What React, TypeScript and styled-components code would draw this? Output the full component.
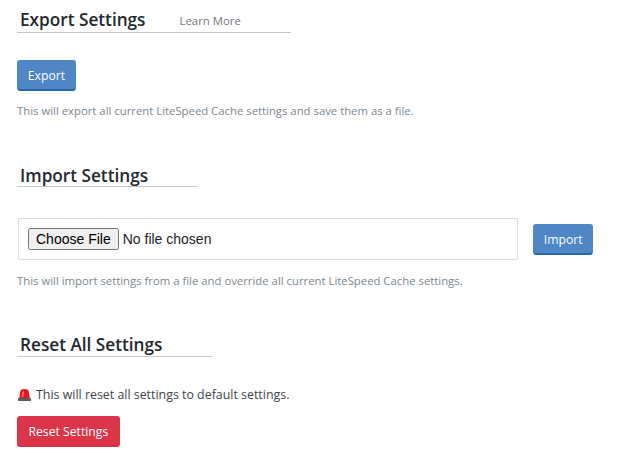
import React from "react";
import styled, { createGlobalStyle } from "styled-components";

const GlobalStyle = createGlobalStyle`
    html, body {
        margin: 0;
        background: #fff;
    }
    body {
        font-family: "Open Sans", "Noto Sans", sans-serif;
        color: #23282d;
    }
`;

const Page = styled.div`
    width: 624px;
    height: 453px;
    box-sizing: border-box;
    overflow: hidden;
    padding: 8px 0 0 17px;
`;

const Section = styled.section<{ $gap?: number }>`
    margin-bottom: ${(p) => p.$gap ?? 0}px;
`;

const Heading = styled.h3<{ $width: number; $after: number; $drop?: number }>`
    display: flex;
    align-items: baseline;
    box-sizing: border-box;
    width: ${(p) => p.$width}px;
    height: 25px;
    margin: 0 0 ${(p) => p.$after}px;
    padding: ${(p) => p.$drop ?? 0}px 0 0 3px;
    border-bottom: 1px solid #c8c8c8;
    font-size: 17.2px;
    line-height: 23px;
    font-weight: 600;
    color: #23282d;
`;

const LearnMore = styled.a`
    align-self: flex-start;
    margin-left: 34px;
    font-size: 11.4px;
    line-height: 26px;
    font-weight: 400;
    color: #72777c;
    text-decoration: none;
`;

const Button = styled.button<{ $danger?: boolean }>`
    display: block;
    box-sizing: border-box;
    height: 31px;
    padding: 1px ${(p) => (p.$danger ? 10.5 : 9.8)}px 0;
    border: 1px solid ${(p) => (p.$danger ? "#dc3549" : "#4d88c6")};
    border-bottom: 2px solid ${(p) => (p.$danger ? "#d5304a" : "#2a66ab")};
    border-radius: 3px;
    background: ${(p) => (p.$danger ? "#dc3549" : "#4e86c6")};
    color: #fff;
    font-family: inherit;
    font-size: 12.2px;
    line-height: 28px;
`;

const Note = styled.p`
    margin: 12px 0 0;
    font-size: 11.33px;
    line-height: 16px;
    color: #7d878f;
`;

const ImportRow = styled.div`
    display: flex;
    align-items: center;
    gap: 15px;
    padding-bottom: 1px;
`;

const FileBox = styled.div`
    box-sizing: border-box;
    display: flex;
    align-items: center;
    width: 500px;
    height: 42px;
    margin-left: 1px;
    padding-left: 9px;
    border: 1px solid #ddd;
    box-shadow: inset 0 0 1px rgba(0, 0, 0, 0.12);
`;

const FileInput = styled.input`
    font-family: "Liberation Sans", Arial, sans-serif;
    font-size: 14px;
    color: #222;
`;

const Warning = styled.p`
    display: flex;
    align-items: center;
    gap: 4px;
    margin: 0 0 12px;
    font-size: 12.4px;
    line-height: 18px;
    color: #3c434a;
`;

const Alarm: React.FC = () => (
    <svg width="15" height="14" viewBox="0 0 15 14">
        <path d="M2.2 10 L3.4 3.2 Q3.9 1 7.5 1 Q11.1 1 11.6 3.2 L12.8 10 Z" fill="#e8141c" />
        <path d="M4.6 9 L5.4 3.8 Q5.8 2.4 7.2 2.4 L6.6 9 Z" fill="#f8666a" />
        <rect x="1" y="10" width="13" height="3" rx="0.8" fill="#5b5b60" />
    </svg>
);

const App: React.FC = () => {
    return (
        <Page>
            <GlobalStyle />
            <Section $gap={43}>
                <Heading $width={274} $after={27}>
                    Export Settings
                    <LearnMore href="#">Learn More</LearnMore>
                </Heading>
                <Button>Export</Button>
                <Note>This will export all current LiteSpeed Cache settings and save them as a file.</Note>
            </Section>
            <Section $gap={43}>
                <Heading $width={181} $after={31} $drop={2}>
                    Import Settings
                </Heading>
                <ImportRow>
                    <FileBox>
                        <FileInput type="file" />
                    </FileBox>
                    <Button>Import</Button>
                </ImportRow>
                <Note>This will import settings from a file and override all current LiteSpeed Cache settings.</Note>
            </Section>
            <Section>
                <Heading $width={195} $after={29} $drop={1}>
                    Reset All Settings
                </Heading>
                <Warning>
                    <Alarm />
                    This will reset all settings to default settings.
                </Warning>
                <Button $danger>Reset Settings</Button>
            </Section>
        </Page>
    );
};

export default App;
